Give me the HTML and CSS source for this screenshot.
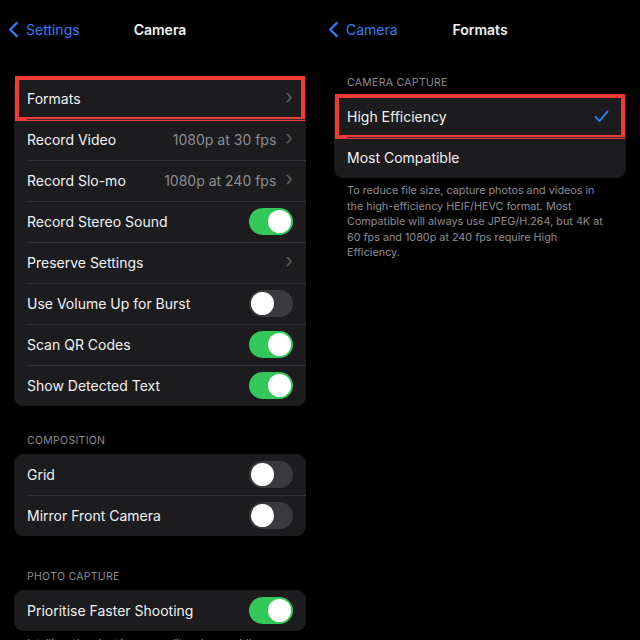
FILE: index.html
```html
<!DOCTYPE html>
<html lang="en">
<head>
  <meta charset="UTF-8" />
  <meta name="viewport" content="width=device-width, initial-scale=1.0"/>
  <title>Camera Formats</title>
  <link rel="stylesheet" href="styles.css">
</head>
<body>

  <div class="pantallas">

    <!-- Camera settings -->
    <section class="pantalla">
      <header class="nav">
        <a class="atras">
          <svg class="chevron-atras" viewBox="0 0 11 18"><path d="M9 2 L2 9 L9 16"/></svg>
          Settings
        </a>
        <h1>Camera</h1>
        <span></span>
      </header>

      <div class="grupo grupo-primero">
        <div class="fila marcada">
          <span>Formats</span>
          <span class="derecha"><span class="flecha">›</span></span>
        </div>
        <div class="fila">
          <span>Record Video</span>
          <span class="derecha"><span class="valor">1080p at 30 fps</span><span class="flecha">›</span></span>
        </div>
        <div class="fila">
          <span>Record Slo-mo</span>
          <span class="derecha"><span class="valor">1080p at 240 fps</span><span class="flecha">›</span></span>
        </div>
        <div class="fila">
          <span>Record Stereo Sound</span>
          <span class="switch on"></span>
        </div>
        <div class="fila">
          <span>Preserve Settings</span>
          <span class="derecha"><span class="flecha">›</span></span>
        </div>
        <div class="fila">
          <span>Use Volume Up for Burst</span>
          <span class="switch"></span>
        </div>
        <div class="fila">
          <span>Scan QR Codes</span>
          <span class="switch on"></span>
        </div>
        <div class="fila">
          <span>Show Detected Text</span>
          <span class="switch on"></span>
        </div>
      </div>

      <h2 class="titulo-grupo">Composition</h2>
      <div class="grupo">
        <div class="fila">
          <span>Grid</span>
          <span class="switch"></span>
        </div>
        <div class="fila">
          <span>Mirror Front Camera</span>
          <span class="switch"></span>
        </div>
      </div>

      <h2 class="titulo-grupo titulo-lejos">Photo Capture</h2>
      <div class="grupo">
        <div class="fila">
          <span>Prioritise Faster Shooting</span>
          <span class="switch on"></span>
        </div>
      </div>
      <p class="nota">Intelligently adapt image quality when rapidly pressing the shutter.</p>
    </section>

    <!-- Formats -->
    <section class="pantalla">
      <header class="nav">
        <a class="atras">
          <svg class="chevron-atras" viewBox="0 0 11 18"><path d="M9 2 L2 9 L9 16"/></svg>
          Camera
        </a>
        <h1>Formats</h1>
        <span></span>
      </header>

      <h2 class="titulo-grupo titulo-arriba">Camera Capture</h2>
      <div class="grupo">
        <div class="fila marcada">
          <span>High Efficiency</span>
          <svg class="check" viewBox="0 0 16 14"><path d="M1.5 7.5 L6 12 L14.5 1.5"/></svg>
        </div>
        <div class="fila">
          <span>Most Compatible</span>
        </div>
      </div>
      <p class="nota nota-estrecha">To reduce file size, capture photos and videos in the high-efficiency HEIF/HEVC format. Most Compatible will always use JPEG/H.264, but 4K at 60 fps and 1080p at 240 fps require High Efficiency.</p>
    </section>

  </div>

</body>
</html>
```

FILE: styles.css
```css
:root {
  --fondo: #000;
  --tarjeta: #1c1c1e;
  --linea: #323235;
  --texto: #f2f2f4;
  --gris: #8d8d93;
  --azul: #2f7ef5;
  --verde: #34c759;
  --apagado: #3a3a3e;
  --rojo: #ef3b33;
}

* {
  margin: 0;
  padding: 0;
  box-sizing: border-box;
}

html, body {
  overflow: hidden;
}

body {
  font-family: Inter, "Noto Sans", sans-serif;
  background: var(--fondo);
  color: var(--texto);
  width: 640px;
  height: 640px;
}

.pantallas {
  display: grid;
  grid-template-columns: 320px 320px;
}

.pantalla {
  padding: 0 14px;
}

.nav {
  height: 59px;
  display: grid;
  grid-template-columns: 1fr auto 1fr;
  align-items: center;
  margin: 0 -6px;
}

.nav h1 {
  font-size: 14px;
  font-weight: 600;
}

.atras {
  display: flex;
  align-items: center;
  gap: 7px;
  color: var(--azul);
  font-size: 14px;
}

.chevron-atras {
  width: 11px;
  height: 17px;
  fill: none;
  stroke: var(--azul);
  stroke-width: 2.4;
  stroke-linecap: round;
  stroke-linejoin: round;
}

.grupo {
  background: var(--tarjeta);
  border-radius: 9px;
}

.grupo-primero {
  margin-top: 19px;
}

.fila {
  position: relative;
  height: 41px;
  display: flex;
  align-items: center;
  justify-content: space-between;
  padding: 0 13px;
  font-size: 14px;
}

.fila + .fila::before {
  content: "";
  position: absolute;
  top: 0;
  left: 13px;
  right: 0;
  border-top: 1px solid var(--linea);
}

.marcada::after {
  content: "";
  position: absolute;
  inset: -2px 1px -2px 1px;
  border: 4px solid var(--rojo);
}

.derecha {
  display: flex;
  align-items: center;
  gap: 9px;
}

.valor {
  color: var(--gris);
}

.flecha {
  color: #5e5e63;
  font-size: 20px;
  line-height: 1;
  margin-top: -3px;
}

.switch {
  position: relative;
  width: 44px;
  height: 27px;
  border-radius: 14px;
  background: var(--apagado);
}

.switch::after {
  content: "";
  position: absolute;
  top: 2px;
  left: 2px;
  width: 23px;
  height: 23px;
  border-radius: 50%;
  background: #fff;
}

.switch.on {
  background: var(--verde);
}

.switch.on::after {
  left: 19px;
}

.titulo-grupo {
  font-size: 10.5px;
  font-weight: 400;
  text-transform: uppercase;
  letter-spacing: 0.3px;
  color: var(--gris);
  padding: 28px 13px 7px;
}

.titulo-lejos {
  padding-top: 34px;
}

.titulo-arriba {
  padding-top: 17px;
}

.check {
  width: 15px;
  height: 13px;
  margin-right: 4px;
  fill: none;
  stroke: var(--azul);
  stroke-width: 2;
  stroke-linecap: round;
  stroke-linejoin: round;
}

.nota {
  font-size: 10.8px;
  line-height: 15.5px;
  color: var(--gris);
  padding: 5px 13px 0;
}

.nota-estrecha {
  padding-right: 19px;
}
```
